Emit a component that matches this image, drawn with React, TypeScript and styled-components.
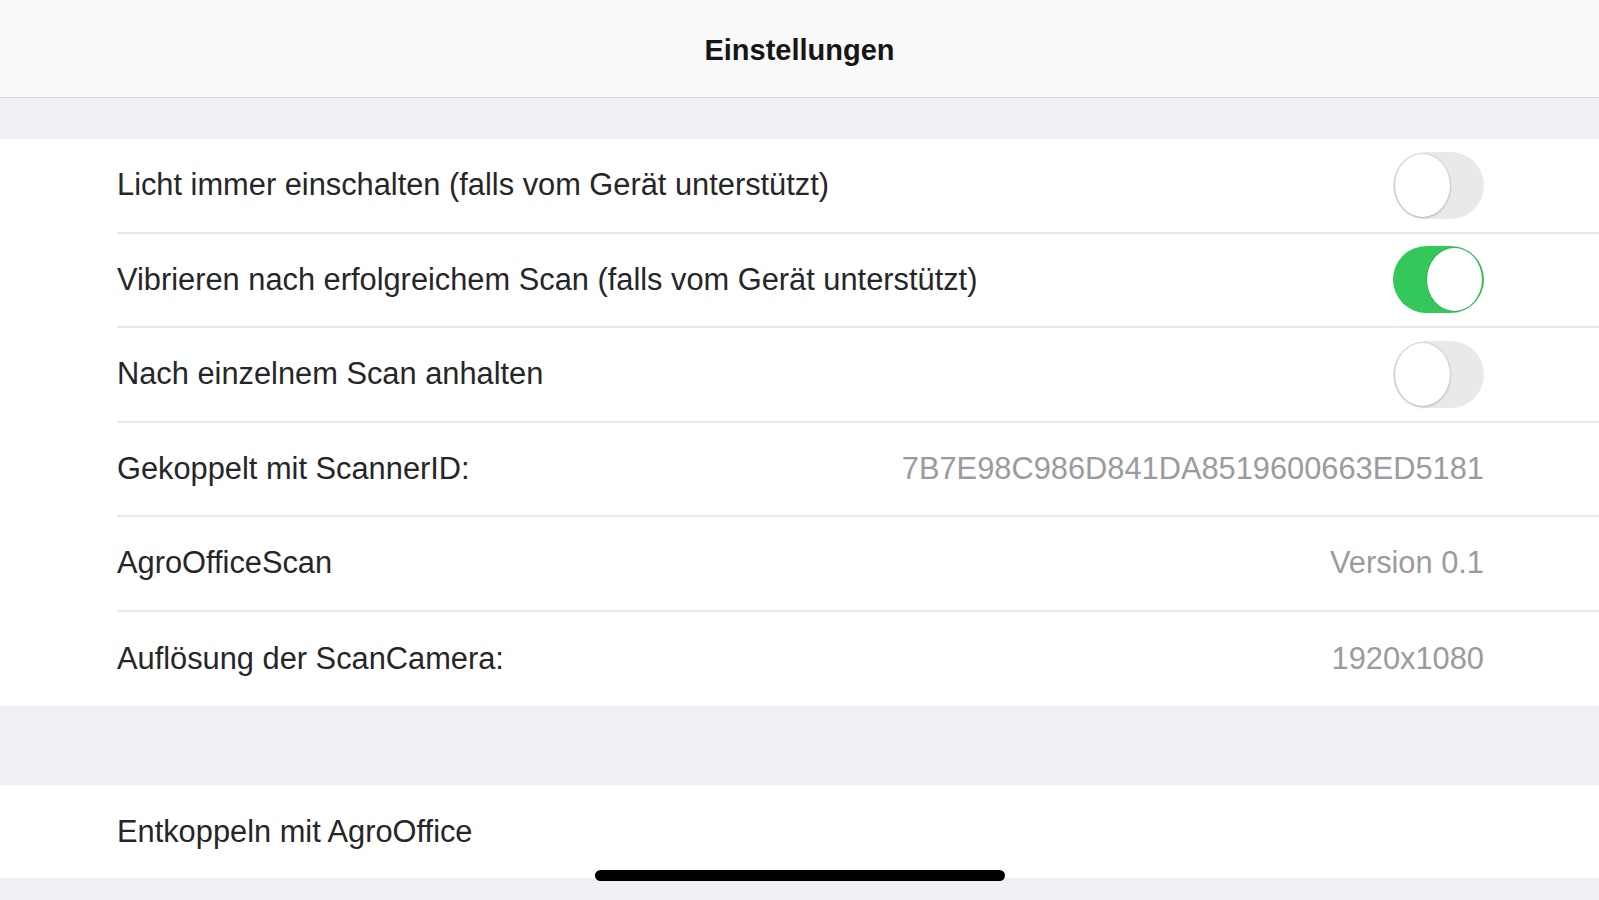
import React from 'react';
import styled, { createGlobalStyle } from 'styled-components';

const GlobalStyle = createGlobalStyle`
  html, body {
    margin: 0;
    padding: 0;
    background: #efeff4;
    font-family: "Liberation Sans", Arial, sans-serif;
    -webkit-font-smoothing: antialiased;
  }
`;

const Page = styled.div`
  position: relative;
  display: flex;
  flex-direction: column;
  min-height: 100vh;
  background: #efeff4;
  overflow: hidden;
`;

const NavBar = styled.header`
  height: 98px;
  display: flex;
  align-items: center;
  justify-content: center;
  padding-top: 4px;
  box-sizing: border-box;
  background: #f9f9f9;
  border-bottom: 1px solid #d9d9dd;
`;

const Title = styled.h1`
  margin: 0;
  font-size: 29px;
  font-weight: 700;
  color: #161616;
`;

const Gap = styled.div<{ $h: number }>`
  height: ${(p) => p.$h}px;
  flex-shrink: 0;
`;

const Group = styled.section`
  background: #ffffff;
  display: flex;
  flex-direction: column;
`;

const Row = styled.div<{ $h?: number }>`
  height: ${(p) => p.$h ?? 94.5}px;
  padding-left: 117px;
  display: flex;
`;

const RowInner = styled.div<{ $last?: boolean }>`
  flex: 1;
  display: flex;
  align-items: center;
  justify-content: space-between;
  padding-right: 115px;
  border-bottom: ${(p) => (p.$last ? 'none' : '2px solid #e8e8ea')};
`;

const Label = styled.span`
  font-size: 30.8px;
  color: #262628;
  white-space: nowrap;
`;

const Value = styled.span`
  font-size: 30.8px;
  color: #9b9b9f;
  white-space: nowrap;
`;

const Track = styled.div<{ $on: boolean }>`
  width: 91px;
  height: 67px;
  box-sizing: border-box;
  border-radius: 34px / 34px;
  padding: 2px;
  display: flex;
  justify-content: ${(p) => (p.$on ? 'flex-end' : 'flex-start')};
  align-items: center;
  background: ${(p) => (p.$on ? '#34c759' : '#e9e9eb')};
`;

const Knob = styled.div<{ $on: boolean }>`
  width: 55px;
  height: 63px;
  border-radius: 50%;
  background: #ffffff;
  box-shadow: ${(p) =>
    p.$on
      ? '0 0 0 1px rgba(30, 150, 60, 0.35)'
      : '0 1px 3px rgba(0, 0, 0, 0.2), 0 0 0 1px rgba(0, 0, 0, 0.06)'};
`;

const HomeIndicator = styled.div`
  position: absolute;
  left: 50%;
  bottom: 19px;
  width: 410px;
  height: 11px;
  margin-left: -205px;
  border-radius: 6px;
  background: #000;
`;

const Toggle = ({ on }: { on: boolean }) => (
  <Track $on={on}>
    <Knob $on={on} />
  </Track>
);

type Item = { label: string; value?: string; toggle?: boolean };

const items: Item[] = [
  { label: 'Licht immer einschalten (falls vom Gerät unterstützt)', toggle: false },
  { label: 'Vibrieren nach erfolgreichem Scan (falls vom Gerät unterstützt)', toggle: true },
  { label: 'Nach einzelnem Scan anhalten', toggle: false },
  { label: 'Gekoppelt mit ScannerID:', value: '7B7E98C986D841DA8519600663ED5181' },
  { label: 'AgroOfficeScan', value: 'Version 0.1' },
  { label: 'Auflösung der ScanCamera:', value: '1920x1080' },
];

export default function App() {
  return (
    <Page>
      <GlobalStyle />
      <NavBar>
        <Title>Einstellungen</Title>
      </NavBar>
      <Gap $h={41} />
      <Group>
        {items.map((it, i) => (
          <Row key={it.label}>
            <RowInner $last={i === items.length - 1}>
              <Label>{it.label}</Label>
              {it.toggle !== undefined ? <Toggle on={it.toggle} /> : <Value>{it.value}</Value>}
            </RowInner>
          </Row>
        ))}
      </Group>
      <Gap $h={79} />
      <Group>
        <Row $h={93}>
          <RowInner $last>
            <Label>Entkoppeln mit AgroOffice</Label>
          </RowInner>
        </Row>
      </Group>
      <HomeIndicator />
    </Page>
  );
}
